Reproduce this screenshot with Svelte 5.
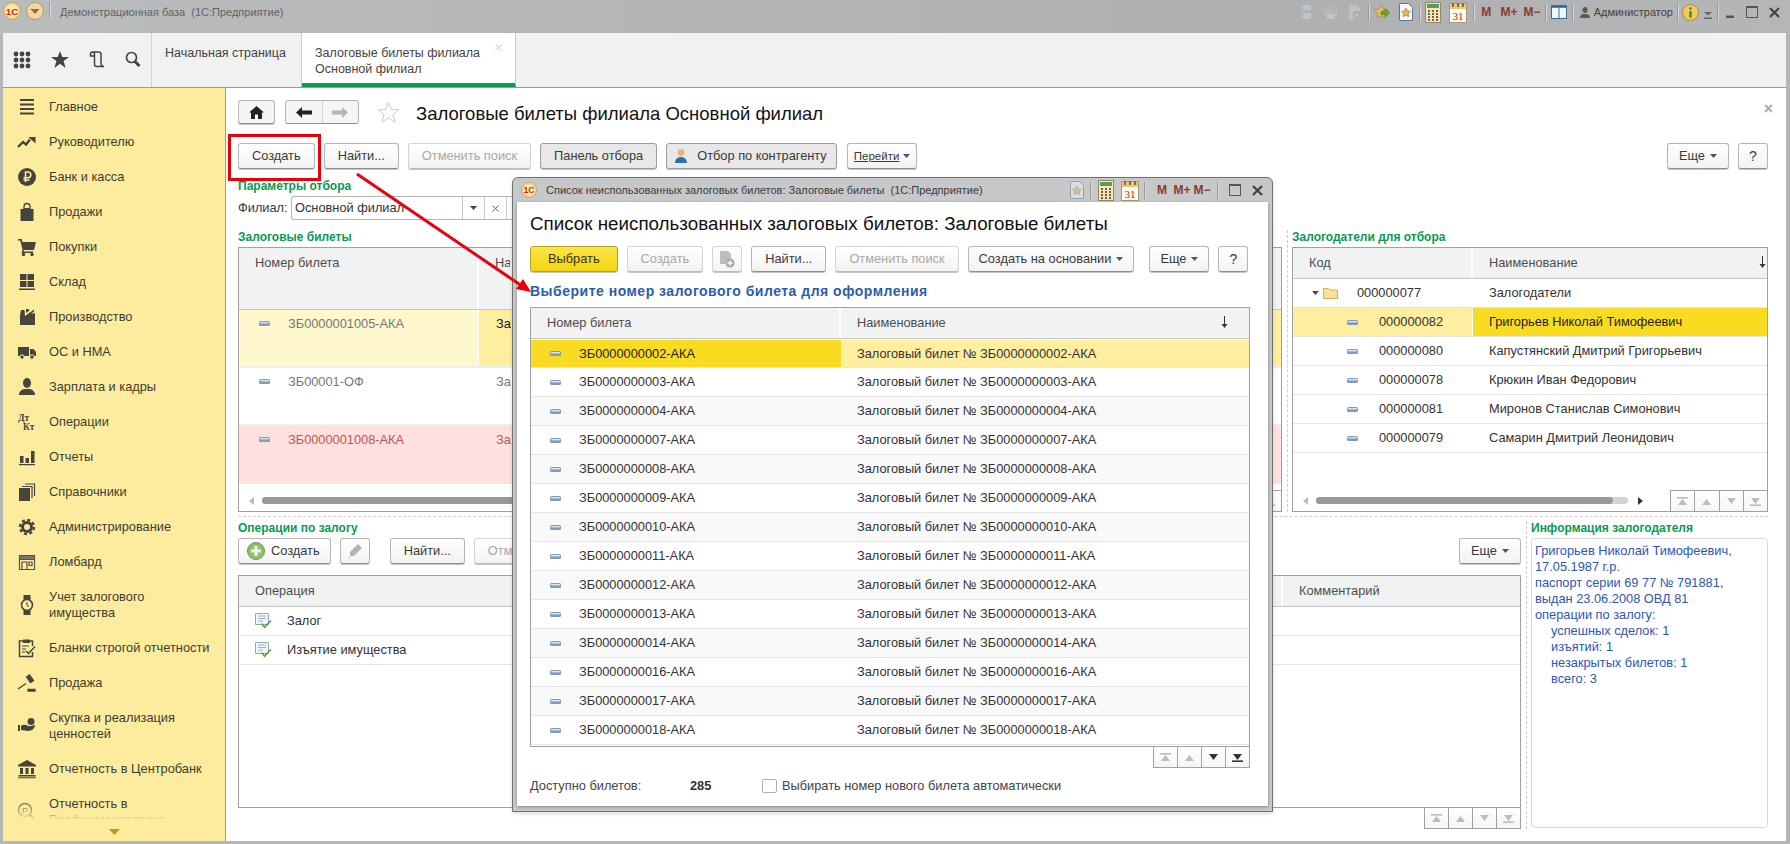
<script>
  const menu = [
    { icon: 'burger', lines: ['Главное'] },
    { icon: 'trend', lines: ['Руководителю'] },
    { icon: 'ruble', lines: ['Банк и касса'] },
    { icon: 'bag', lines: ['Продажи'] },
    { icon: 'cart', lines: ['Покупки'] },
    { icon: 'stock', lines: ['Склад'] },
    { icon: 'factory', lines: ['Производство'] },
    { icon: 'truck', lines: ['ОС и НМА'] },
    { icon: 'person', lines: ['Зарплата и кадры'] },
    { icon: 'dtkt', lines: ['Операции'] },
    { icon: 'bars', lines: ['Отчеты'] },
    { icon: 'docs', lines: ['Справочники'] },
    { icon: 'gear', lines: ['Администрирование'] },
    { icon: 'shop', lines: ['Ломбард'] },
    { icon: 'watch', lines: ['Учет залогового', 'имущества'] },
    { icon: 'clip', lines: ['Бланки строгой отчетности'] },
    { icon: 'gavel', lines: ['Продажа'] },
    { icon: 'hand', lines: ['Скупка и реализация', 'ценностей'] },
    { icon: 'bank', lines: ['Отчетность в Центробанк'] },
    { icon: 'lens', lines: ['Отчетность в', 'Росфинмониторинг'] }
  ]

  const tickets = [
    { no: 'ЗБ0000001005-АКА', name: 'Залоговый билет', kind: 'cur' },
    { no: 'ЗБ00001-ОФ', name: 'Залоговый билет', kind: '' },
    { no: 'ЗБ0000001008-АКА', name: 'Залоговый билет', kind: 'bad' }
  ]

  const pawners = [
    { code: '000000082', name: 'Григорьев Николай Тимофеевич', sel: true },
    { code: '000000080', name: 'Капустянский Дмитрий Григорьевич' },
    { code: '000000078', name: 'Крюкин Иван Федорович' },
    { code: '000000081', name: 'Миронов Станислав Симонович' },
    { code: '000000079', name: 'Самарин Дмитрий Леонидович' }
  ]

  const free = ['02', '03', '04', '07', '08', '09', '10', '11', '12', '13', '14', '16', '17', '18']
    .map((n) => 'ЗБ00000000' + n + '-АКА')
</script>

{#snippet dash()}
  <svg class="dash" width="11" height="5" viewBox="0 0 11 5"><rect width="11" height="5" rx="1.5" fill="#7f9cc0"/><rect x="1" y="1" width="9" height="1.4" fill="#dbe6f2"/></svg>
{/snippet}

{#snippet logo(size)}
  <svg width={size} height={size} viewBox="0 0 20 20">
    <circle cx="10" cy="10" r="9.5" fill="#f6d98a" stroke="#b9a26a"/>
    <circle cx="10" cy="10" r="7" fill="#fbe9b0"/>
    <text x="10" y="14" text-anchor="middle" font-size="11" font-weight="700" font-family="Liberation Sans" fill="#d8261c">1С</text>
  </svg>
{/snippet}

{#snippet caret(color)}
  <svg class="caret" width="7" height="4" viewBox="0 0 7 4"><path d="M0 0h7L3.5 4z" fill={color}/></svg>
{/snippet}

{#snippet sortDown()}
  <svg class="sort" width="7" height="12" viewBox="0 0 7 12"><path d="M3.500 0v10" stroke="#333"/><path d="M.5 8h6l-3 4z" fill="#333"/></svg>
{/snippet}

{#snippet starDoc()}
  <svg width="16" height="20" viewBox="0 0 16 20"><path d="M1.500 1.500h9l4 4v13h-13z" fill="#f4f7fb" stroke="#4f78a8"/><path d="M8 6l1.500 3 3 .4-2.200 2.100.6 3.200L8 13.200l-2.900 1.500.6-3.200L3.500 9.400l3-.4z" fill="#e8b64c" stroke="#a5762a" stroke-width=".6"/></svg>
{/snippet}

{#snippet calc()}
  <svg width="16" height="21" viewBox="0 0 16 21"><rect x=".5" y=".5" width="15" height="20" fill="#efe6c4" stroke="#8f8a6a"/><rect x="2" y="2" width="12" height="4" fill="#5f9a54"/><path d="M3 8h2v2H3zM7 8h2v2H7zM11 8h2v2h-2zM3 11h2v2H3zM7 11h2v2H7zM11 11h2v2h-2zM3 14h2v2H3zM7 14h2v2H7zM11 14h2v2h-2zM3 17h2v2H3zM7 17h2v2H7zM11 17h2v2h-2z" fill="#8a5a2a"/></svg>
{/snippet}

{#snippet cal()}
  <svg class="calsheet" width="18" height="21" viewBox="0 0 18 21"><rect x=".5" y="1.500" width="17" height="19" fill="#fdfaf0" stroke="#a89a70"/><rect x="1" y="2" width="16" height="5" fill="#ebc77a"/><path d="M3 1h2v4H3zM8 1h2v4H8zM13 1h2v4h-2z" fill="#8a6a3a"/><text x="9" y="18" text-anchor="middle" font-size="11" font-family="Liberation Serif" fill="#c8200f">31</text></svg>
{/snippet}

{#snippet nav(on)}
  <div class="nav">
    {#each [0, 1, 2, 3] as i}
      <span class="navcell">
        <svg width="11" height="9" viewBox="0 0 11 9" fill={on && i > 1 ? '#333' : '#bdbdbd'}>
          {#if i < 2}
            {#if i == 0}<rect width="11" height="1.600"/>{/if}
            <path d="M5.500 2L10 8H1z"/>
          {:else}
            <path d="M1 1h9L5.500 7z"/>
            {#if i == 3}<rect y="7.400" width="11" height="1.600"/>{/if}
          {/if}
        </svg>
      </span>
    {/each}
  </div>
{/snippet}

{#snippet opIcon()}
  <svg width="17" height="16" viewBox="0 0 17 16"><path d="M.5.500h13v11H.5z" fill="#f3f7fb" stroke="#8ea6bf"/><path d="M3 3h8M3 5.500h8M3 8h5" stroke="#9db0c4"/><path d="M7 10l2.500 3L15.500 7l1 1-7 7.500L6 11z" fill="#5aa32f"/></svg>
{/snippet}

{#snippet sideIcon(name)}
  <svg width="20" height="20" viewBox="0 0 20 20" fill="#45453c">
    {#if name == 'burger'}
      <path d="M3 2h14v2H3zM3 6.500h14v2H3zM3 11h14v2H3zM3 15.500h14v2H3z"/>
    {:else if name == 'trend'}
      <path d="M1 15l5-5 3 2.500 4-5" fill="none" stroke="#45453c" stroke-width="2.400"/><path d="M11.500 5h7v6.500z"/>
    {:else if name == 'ruble'}
      <circle cx="10" cy="10" r="9"/><path d="M8.500 15V5h2.500a2.800 2.800 0 0 1 0 5.700H6.500M6.500 13h6" fill="none" stroke="#fdec9e" stroke-width="1.500"/>
    {:else if name == 'bag'}
      <path d="M3.500 7h3l.5-1h6l.5 1h3v12h-13z"/><path d="M7 9V4.500a3 3 0 0 1 6 0V9" fill="none" stroke="#45453c" stroke-width="1.300"/>
    {:else if name == 'cart'}
      <path d="M1 2h3.500l1 3H19l-2 8H7l-.5 1.500H16v1.500H4.500l1-3L3.300 3.500H1z"/><circle cx="6.500" cy="17.500" r="1.700"/><circle cx="15" cy="17.500" r="1.700"/>
    {:else if name == 'stock'}
      <path d="M3 2h6.500v6H3zM10.500 2H17v6h-6.500zM3 9h6.500v6H3zM10.500 9H17v6h-6.500zM2 16.500h16V18H2z"/>
    {:else if name == 'factory'}
      <path d="M3 18V8l1-5h3.500l.5 6 9-6.500v2L14 7l4-1v12zM9 2h2.500l1 1.500L9 6z"/>
    {:else if name == 'truck'}
      <path d="M1 5h11v9H1zM13 7h3.500l2.500 3v4h-6z"/><circle cx="5" cy="15" r="2.200" stroke="#fdec9e"/><circle cx="15" cy="15" r="2.200" stroke="#fdec9e"/>
    {:else if name == 'person'}
      <ellipse cx="10" cy="6" rx="4" ry="5"/><path d="M2 18c0-4 3-5.500 5.500-6h5c2.500.5 5.500 2 5.500 6z"/>
    {:else if name == 'dtkt'}
      <text x="1" y="9" font-size="9.500" font-weight="700" font-family="Liberation Serif">Дт</text>
      <text x="6" y="18" font-size="9.500" font-weight="700" font-family="Liberation Serif">Кт</text>
    {:else if name == 'bars'}
      <path d="M3 9h3.500v7H3zM8.500 11H12v5H8.500zM14 4h3.500v12H14zM2 17h16v1.300H2z"/>
    {:else if name == 'docs'}
      <path d="M2 6h11v13H2z"/><path d="M5 4.500h10V16M8 2h9.500v12" fill="none" stroke="#45453c" stroke-width="1.200"/>
    {:else if name == 'gear'}
      <circle cx="10" cy="10" r="4.500" fill="none" stroke="#45453c" stroke-width="3"/>
      <circle cx="10" cy="10" r="7" fill="none" stroke="#45453c" stroke-width="2.500" stroke-dasharray="3 2.500"/>
    {:else if name == 'shop'}
      <path d="M2.500 3.500h15v14h-15zM2.500 7.500h15M5 10h5v7.500H5zM12 10h3v3.500h-3z" fill="none" stroke="#55554a" stroke-width="1.200"/><path d="M3 4h14v3H3z" fill="#77776a"/>
    {:else if name == 'watch'}
      <path d="M6.500 0h7v5h-7zM6.500 15h7v5h-7z"/><circle cx="10" cy="10" r="5.500" fill="#fdec9e" stroke="#45453c" stroke-width="1.600"/><path d="M10 7v3.500l2 1" fill="none" stroke="#45453c"/>
    {:else if name == 'clip'}
      <path d="M6 3H2.500v15.500h13V14M13 3h2.500v5" fill="none" stroke="#45453c" stroke-width="1.500"/><path d="M6 1.500h7v3.500H6z"/><path d="M5 8h7M5 11h4M5 14h3" stroke="#45453c"/><path d="M9 13l2.500 2.500L18 8.500" fill="none" stroke="#45453c" stroke-width="1.500"/>
    {:else if name == 'gavel'}
      <path d="M1 16l8-5.500M11 16.500h7V18h-7zM9.500 4l3-2 4 5.500-3 2z" stroke="#45453c" stroke-width="1.300"/>
    {:else if name == 'hand'}
      <circle cx="14" cy="5.500" r="3.500"/><path d="M4 10c3-2 5-1 7 0h3l4-1c0 3-3 6-7 6-3 0-4-1-7-1zM1 9h2v6H1z"/>
    {:else if name == 'bank'}
      <path d="M10 1l9 5v1.500H1V6zM3 9h3v6H3zM8.500 9h3v6h-3zM14 9h3v6h-3zM1.500 16h17v1.500h-17zM1 18.200h18v1H1z"/>
    {:else if name == 'lens'}
      <g opacity=".6"><circle cx="8" cy="8" r="6.500" fill="none" stroke="#45453c" stroke-width="1.400"/><path d="M13 13l6 5.500" stroke="#45453c" stroke-width="2.500"/><text x="8" y="11.500" text-anchor="middle" font-size="9" font-family="Liberation Sans">P</text></g>
    {/if}
  </svg>
{/snippet}

<div class="app">
  <header class="titlebar">
    <span class="tl-logo">{@render logo(18)}</span>
    <svg class="tl-menu" width="18" height="18" viewBox="0 0 18 18"><circle cx="9" cy="9" r="8.500" fill="#f4d79a" stroke="#a99a74"/><path d="M4.500 7h9L9 12z" fill="#8a6a4a"/></svg>
    <i class="sep big"></i>
    <span class="tl-text">Демонстрационная база&nbsp; (1С:Предприятие)</span>
    <div class="tl-tools">
      <svg class="tool" width="16" height="16" viewBox="0 0 16 16" opacity=".5"><path d="M1 1h14v14H1z" fill="#a7b9c9"/><path d="M4 1h8v5H4zM4 9h8v6H4z" fill="#d5dbe0"/></svg>
      <svg class="tool" width="16" height="16" viewBox="0 0 16 16" opacity=".5"><path d="M4 1h8v4H4zM1 5h14v7H1z" fill="#b9bfc4"/><path d="M4 10h8v5H4z" fill="#d9dcde"/></svg>
      <svg class="tool" width="16" height="16" viewBox="0 0 16 16" opacity=".5"><path d="M2 1h8l3 3v11H2z" fill="#cfd4d8"/><circle cx="10" cy="11" r="3" fill="none" stroke="#8ba0b0" stroke-width="1.500"/></svg>
      <i class="sep"></i>
      <svg class="tool" width="16" height="16" viewBox="0 0 20 20"><path d="M9 1l2.500 5.500 6 .7-4.500 4 1.200 6L9 14.300 3.800 17.200 5 11.200.5 7.200l6-.7z" fill="#edc25c" stroke="#9a7a30" stroke-width=".7"/><path d="M9 9h5V6l5.500 5-5.500 5v-3H9z" fill="#6aa536" stroke="#3e6e1c" stroke-width=".7"/></svg>
      <span class="tool">{@render starDoc()}</span>
      <i class="sep"></i>
      <span class="tool">{@render calc()}</span>
      <span class="tool">{@render cal()}</span>
      <i class="sep wide"></i>
      <span class="mem">M</span><span class="mem">M+</span><span class="mem">M−</span>
      <i class="sep"></i>
      <svg class="tool" width="16" height="14" viewBox="0 0 17 15"><rect x=".5" y=".5" width="16" height="14" fill="#f1f6fb" stroke="#32689c"/><rect x="1" y="1" width="15" height="2" fill="#32689c"/><path d="M8.500 3v11" stroke="#32689c"/></svg>
      <i class="sep"></i>
      <svg class="user" width="10" height="11" viewBox="0 0 10 11" fill="#5c5c50"><ellipse cx="5" cy="3" rx="2.500" ry="3"/><path d="M0 11c0-3 2-4 3-4h4c1 0 3 1 3 4z"/></svg>
      <span class="adm">Администратор</span>
      <i class="sep"></i>
      <svg class="info" width="17" height="17" viewBox="0 0 17 17"><circle cx="8.500" cy="8.500" r="8" fill="#f0ca5e" stroke="#a98a3a"/><circle cx="8.500" cy="4.500" r="1.300" fill="#3c8a2a"/><path d="M7.300 7h2.400v6.500H7.300z" fill="#3c8a2a"/></svg>
      <svg class="dd" width="9" height="7" viewBox="0 0 9 7"><path d="M0 0h8L4 3.500z" fill="#666"/><path d="M0 5.500h8V7H0z" fill="#666"/></svg>
      <i class="sep"></i>
      <span class="wbtn"><svg width="8" height="12" viewBox="0 0 8 12"><path d="M0 9.500h8V12H0z" fill="#555"/></svg></span>
      <span class="wbtn"><svg width="12" height="12" viewBox="0 0 12 12"><rect x=".5" y=".5" width="11" height="11" fill="none" stroke="#555"/><path d="M0 0h12v2H0z" fill="#555"/></svg></span>
      <span class="wbtn"><svg width="11" height="11" viewBox="0 0 11 11"><path d="M1 1l9 9M10 1l-9 9" stroke="#444" stroke-width="2.200"/></svg></span>
    </div>
  </header>

  <div class="tabbar">
    <div class="quick">
      <svg width="18" height="18" viewBox="0 0 18 18" fill="#444"><circle cx="3" cy="3" r="2.400"/><circle cx="9" cy="3" r="2.400"/><circle cx="15" cy="3" r="2.400"/><circle cx="3" cy="9" r="2.400"/><circle cx="9" cy="9" r="2.400"/><circle cx="15" cy="9" r="2.400"/><circle cx="3" cy="15" r="2.400"/><circle cx="9" cy="15" r="2.400"/><circle cx="15" cy="15" r="2.400"/></svg>
      <svg width="18" height="17" viewBox="0 0 18 17" fill="#444"><path d="M9 0l2.300 6H18l-5.400 4 2 7L9 12.800 3.400 17l2-7L0 6h6.700z"/></svg>
      <svg width="16" height="17" viewBox="0 0 16 17" fill="none" stroke="#444" stroke-width="1.500"><path d="M3 1H10C11.500 1 12 2 12 3V12C12 14 13 15.500 15 15.500H7.500C6 15.500 5.500 14.500 5.500 13V3C5.500 2 5 1 3.500 1C2 1 1.500 2 1.500 3.500V5H5.500"/></svg>
      <svg width="16" height="16" viewBox="0 0 16 16" fill="none" stroke="#444"><circle cx="6.500" cy="6.500" r="5" stroke-width="1.700"/><path d="M10 10.500l4.500 4.500" stroke-width="3"/></svg>
    </div>
    <div class="tab first">Начальная страница</div>
    <div class="tab active">
      Залоговые билеты филиала<br>Основной филиал
      <svg class="tabx" width="7" height="7" viewBox="0 0 7 7"><path d="M.5.500l6 6M6.500.500l-6 6" stroke="#c4c8c8"/></svg>
    </div>
  </div>

  <div class="body">
    <aside class="side">
      {#each menu as m}
        <div class="item" class:two={m.lines.length > 1}>
          <span class="sicon">{@render sideIcon(m.icon)}</span>
          <span class="stext">{#each m.lines as l}{l}<br>{/each}</span>
        </div>
      {/each}
      <div class="fade"><svg width="11" height="6" viewBox="0 0 11 6"><path d="M0 0h11L5.500 6z" fill="#bb9a1e"/></svg></div>
    </aside>

    <main class="main">
      <div class="head">
        <button class="btn home"><svg width="15" height="13" viewBox="0 0 15 13" fill="#222"><path d="M7.500 0L15 6.500h-2V13H9V8.500H6V13H2V6.500H0z"/></svg></button>
        <div class="btngroup">
          <span><svg width="16" height="11" viewBox="0 0 16 11" fill="#222"><path d="M6 0v3.500h10v4H6V11L0 5.500z"/></svg></span>
          <span><svg width="16" height="11" viewBox="0 0 16 11" fill="#b5b5b5"><path d="M10 0v3.500H0v4h10V11l6-5.500z"/></svg></span>
        </div>
        <svg class="favstar" width="23" height="23" viewBox="0 0 23 23"><path d="M11.500 1.500l3 7.200h7.500l-6 4.900 2.200 7.700-6.700-4.500-6.700 4.500 2.200-7.700-6-4.900h7.500z" fill="#fff" stroke="#c9cccc"/></svg>
        <h1 class="title">Залоговые билеты филиала Основной филиал</h1>
        <svg class="closex" width="9" height="9" viewBox="0 0 9 9"><path d="M1 1l7 7M8 1L1 8" stroke="#a9adad" stroke-width="1.800"/></svg>
      </div>

      <div class="tb first">
        <button class="btn">Создать</button>
        <button class="btn">Найти...</button>
        <button class="btn off">Отменить поиск</button>
        <button class="btn pressed">Панель отбора</button>
        <button class="btn pressed2">
          <svg width="16" height="16" viewBox="0 0 16 16"><circle cx="8" cy="4.500" r="3.500" fill="#eab678"/><path d="M2 15c0-4 3-6 6-6s6 2 6 6z" fill="#2e6fb5"/></svg>
          Отбор по контрагенту
        </button>
        <button class="btn small"><u>Перейти</u> {@render caret('#555')}</button>
        <div class="grow"></div>
        <button class="btn more">Еще {@render caret('#555')}</button>
        <button class="btn q">?</button>
      </div>

      <div class="grp first">Параметры отбора</div>
      <div class="filter">
        <span class="flabel">Филиал:</span>
        <div class="input">
          <span class="ival">Основной филиал</span>
          <span class="icell">{@render caret('#444')}</span>
          <span class="icell"><svg width="7" height="7" viewBox="0 0 7 7"><path d="M.5.500l6 6M6.500.500l-6 6" stroke="#666"/></svg></span>
          <span class="icell"></span>
        </div>
      </div>

      <div class="upper">
        <section class="ucol">
          <div class="grp">Залоговые билеты</div>
          <div class="table big">
            <div class="thead tall">
              <div class="th c240">Номер билета</div>
              <div class="th"><span class="cut">Наименование</span></div>
            </div>
            {#each tickets as t}
              <div class="trow tallrow {t.kind}">
                <div class="td c240 col1">{@render dash()}<span>{t.no}</span></div>
                <div class="td col2"><span class="cut">{t.name}</span></div>
              </div>
            {/each}
            <div class="grow"></div>
            <div class="tfoot">
              <svg class="arrl" width="5" height="8" viewBox="0 0 5 8"><path d="M5 0v8L0 4z" fill="#bbb"/></svg>
              <div class="track long"><div class="thumb"></div></div>
              {@render nav(false)}
            </div>
          </div>
        </section>
        <div class="vdash"></div>
        <section class="rcol">
          <div class="grp">Залогодатели для отбора</div>
          <div class="table big">
            <div class="thead">
              <div class="th c180">Код</div>
              <div class="th">Наименование{@render sortDown()}</div>
            </div>
            <div class="trow">
              <div class="td c180 tree root">
                {@render caret('#444')}
                <svg width="15" height="12" viewBox="0 0 15 12"><path d="M.5 1.500h5l1.500 1.500h7.500v8.500H.5z" fill="#fbe19c" stroke="#e0a85a"/></svg>
                <span>000000077</span>
              </div>
              <div class="td name">Залогодатели</div>
            </div>
            {#each pawners as p}
              <div class="trow" class:sel={p.sel}>
                <div class="td c180 tree">{@render dash()}<span>{p.code}</span></div>
                <div class="td name">{p.name}</div>
              </div>
            {/each}
            <div class="grow"></div>
            <div class="tfoot">
              <svg class="arrl" width="5" height="8" viewBox="0 0 5 8"><path d="M5 0v8L0 4z" fill="#bbb"/></svg>
              <div class="track"><div class="thumb"></div></div>
              <svg class="arrr" width="5" height="8" viewBox="0 0 5 8"><path d="M0 0v8l5-4z" fill="#333"/></svg>
              {@render nav(false)}
            </div>
          </div>
        </section>
      </div>

      <div class="hdash"></div>

      <div class="lower">
        <section class="lcol">
          <div class="grp">Операции по залогу</div>
          <div class="tb ops">
            <button class="btn plus">
              <svg width="18" height="18" viewBox="0 0 18 18"><circle cx="9" cy="9" r="8.500" fill="#8fc06a" stroke="#6f8f5a"/><path d="M7.500 4h3v3.500H14v3h-3.500V14h-3v-3.500H4v-3h3.500z" fill="#f3f8ee"/></svg>
              Создать
            </button>
            <button class="btn pen"><svg width="14" height="14" viewBox="0 0 14 14" fill="#b5b5b5"><path d="M10 0l4 4-8 8H2v-4zM0 14l1.500-1.500h1L1 14z"/></svg></button>
            <button class="btn findop">Найти...</button>
            <button class="btn off cutbtn">Отменить поиск</button>
            <div class="grow"></div>
            <button class="btn more">Еще {@render caret('#555')}</button>
          </div>
          <div class="table ops">
            <div class="thead">
              <div class="th opcol">Операция</div>
              <div class="grow"></div>
              <div class="th ccol">Комментарий</div>
            </div>
            <div class="trow"><div class="td op">{@render opIcon()}<span>Залог</span></div></div>
            <div class="trow"><div class="td op">{@render opIcon()}<span>Изъятие имущества</span></div></div>
          </div>
          {@render nav(false)}
        </section>
        <div class="vdash"></div>
        <section class="icol">
          <div class="grp">Информация залогодателя</div>
          <div class="infobox">
            Григорьев Николай Тимофеевич,<br>
            17.05.1987 г.р.<br>
            паспорт серии 69 77 № 791881,<br>
            выдан 23.06.2008 ОВД 81<br>
            операции по залогу:
            <div class="ind">успешных сделок: 1<br>изъятий: 1<br>незакрытых билетов: 1<br>всего: 3</div>
          </div>
        </section>
      </div>
    </main>
  </div>

  <div class="modal">
    <div class="mtitle">
      <span class="mlogo">{@render logo(16)}</span>
      <span class="mtext">Список неиспользованных залоговых билетов: Залоговые билеты&nbsp; (1С:Предприятие)</span>
      <div class="mtools">
        <span class="faded">{@render starDoc()}</span>
        <i class="sep"></i>
        {@render calc()}
        {@render cal()}
        <i class="sep"></i>
        <span class="mems"><span class="mem sm">M</span><span class="mem sm">M+</span><span class="mem sm">M−</span></span>
        <i class="sep"></i>
        <svg class="mmax" width="12" height="12" viewBox="0 0 12 12"><rect x=".5" y=".5" width="11" height="11" fill="none" stroke="#555"/><path d="M0 0h12v2H0z" fill="#555"/></svg>
        <svg class="mclose" width="11" height="11" viewBox="0 0 11 11"><path d="M1 1l9 9M10 1l-9 9" stroke="#444" stroke-width="2.200"/></svg>
      </div>
    </div>
    <div class="mbody">
      <h2 class="mhead">Список неиспользованных залоговых билетов: Залоговые билеты</h2>
      <div class="tb mtb">
        <button class="btn primary">Выбрать</button>
        <button class="btn off">Создать</button>
        <button class="btn off pen"><svg width="16" height="17" viewBox="0 0 16 17"><path d="M1 0h8l3 3v10H1z" fill="#bdbdbd"/><circle cx="11" cy="12" r="4.500" fill="#aaa"/><path d="M10 9.500h2v1.500h1.500v2H12v1.500h-2V13H8.500v-2H10z" fill="#eee"/></svg></button>
        <button class="btn">Найти...</button>
        <button class="btn off">Отменить поиск</button>
        <button class="btn based">Создать на основании {@render caret('#555')}</button>
        <button class="btn more shift">Еще {@render caret('#555')}</button>
        <button class="btn q">?</button>
      </div>
      <div class="hint">Выберите номер залогового билета для оформления</div>
      <div class="table modalt">
        <div class="thead">
          <div class="th c310">Номер билета</div>
          <div class="th in">Наименование{@render sortDown()}</div>
        </div>
        {#each free as f, i}
          <div class="trow mrow" class:first={i == 0}>
            <div class="td c310 col1">{@render dash()}<span>{f}</span></div>
            <div class="td mname">Залоговый билет № {f}</div>
          </div>
        {/each}
      </div>
      {@render nav(true)}
      <div class="mfoot">
        <span class="avail">Доступно билетов:</span>
        <b>285</b>
        <span class="check"></span>
        <span class="auto">Выбирать номер нового билета автоматически</span>
      </div>
    </div>
  </div>

  <svg class="marks" width="1790" height="844" viewBox="0 0 1790 844">
    <rect x="229.500" y="135.500" width="90" height="44" fill="none" stroke="#e8000c" stroke-width="3"/>
    <path d="M357 174L522 286" stroke="#e8000c" stroke-width="3"/>
    <path d="M531 292L516 289L523 279z" fill="#e8000c"/>
  </svg>
</div>

<style>
  :global(body) {
    overflow: hidden;
  }
  .app {
    position: relative;
    width: 1790px;
    height: 844px;
    display: flex;
    flex-direction: column;
    background: #b4b6b7;
    font: 12.800px/16px "Liberation Sans", Arial, sans-serif;
    color: #3a3a3a;
    overflow: hidden;
  }
  .grow {
    flex: 1;
  }
  svg {
    flex: none;
    display: block;
  }

  .titlebar {
    height: 33px;
    flex: none;
    display: flex;
    align-items: flex-start;
    padding: 2px 0 0 3px;
    box-sizing: border-box;
    background: linear-gradient(90deg, #bbbcbd, #adafb0 70%, #b4b6b7);
  }
  .tl-menu {
    margin-left: 5px;
  }
  .sep {
    flex: none;
    width: 1px;
    height: 17px;
    margin: 0 0 0 2px;
    background: #d7d9da;
    box-shadow: -1px 0 0 #96989a;
  }
  .sep.wide {
    margin-left: 5px;
  }
  .sep.big {
    margin: 0 9px 0 6px;
  }
  .tl-text {
    line-height: 20px;
    font-size: 11px;
    color: #606264;
  }
  .tl-tools {
    margin-left: auto;
    display: flex;
    align-items: center;
    height: 20px;
    padding-right: 5px;
  }
  .tool {
    width: 24px;
    display: flex;
    justify-content: center;
  }
  svg.tool {
    padding: 0 4px;
    box-sizing: content-box;
    width: 16px;
  }
  .mem {
    width: 23px;
    text-align: center;
    font-weight: 700;
    font-size: 12px;
    color: #8b3a30;
  }
  .mems {
    display: flex;
  }
  .mem.sm {
    width: 20px;
    font-size: 12px;
  }
  .user {
    margin: 0 4px 0 6px;
  }
  .adm {
    font-size: 11px;
    color: #4c4034;
    white-space: nowrap;
    margin-right: 3px;
  }
  .info {
    margin: 0 5px 0 3px;
  }
  .dd {
    margin: 6px 3px 0 0;
  }
  .wbtn {
    width: 22px;
    display: flex;
    justify-content: center;
  }

  .tabbar {
    height: 55px;
    flex: none;
    margin: 0 4px 0 3px;
    display: flex;
    box-sizing: border-box;
    background: #f0f2f1;
    border-bottom: 1px solid #9a9c9c;
  }
  .quick {
    width: 149px;
    flex: none;
    box-sizing: border-box;
    display: flex;
    align-items: flex-start;
    gap: 20px;
    padding: 18px 0 0 10px;
    border-right: 1px solid #d2d4d4;
  }
  .tab {
    position: relative;
    background: #fff;
    padding: 12px 0 0 13px;
    box-sizing: border-box;
    color: #444;
    font-size: 12.500px;
  }
  .tab.first {
    width: 150px;
    background: #f0f2f1;
    border-right: 1px solid #c9cbcb;
  }
  .tab.active {
    width: 214px;
    border-right: 1px solid #c9cbcb;
    border-bottom: 4px solid #0d9a4e;
  }
  .tabx {
    position: absolute;
    top: 11px;
    right: 13px;
  }

  .body {
    flex: 1;
    min-height: 0;
    display: flex;
    margin: 0 4px 3px 3px;
    background: #fff;
  }
  .side {
    position: relative;
    width: 223px;
    flex: none;
    box-sizing: border-box;
    padding-top: 1px;
    background: #fdec9e;
    border-right: 1px solid #b9a234;
    overflow: hidden;
    color: #3e3c30;
  }
  .item {
    height: 35px;
    display: flex;
    align-items: center;
  }
  .item.two {
    height: 51px;
  }
  .sicon {
    width: 46px;
    flex: none;
    display: flex;
    justify-content: center;
    padding-left: 2px;
    box-sizing: border-box;
  }
  .fade {
    position: absolute;
    left: 0;
    right: 0;
    bottom: 0;
    height: 34px;
    display: flex;
    align-items: flex-end;
    justify-content: center;
    padding-bottom: 6px;
    box-sizing: border-box;
    background: linear-gradient(#fdec9e00, #fdec9e 38%);
  }

  .main {
    flex: 1;
    min-width: 0;
    padding: 12px 18px 0 12px;
  }
  .head {
    height: 24px;
    display: flex;
    align-items: center;
  }
  .btn {
    height: 26px;
    padding: 0 13px;
    display: flex;
    align-items: center;
    flex: none;
    gap: 5px;
    box-sizing: border-box;
    background: linear-gradient(#fff, #f3f3f3);
    border: 1px solid #b6b6b6;
    border-bottom-color: #8f8f8f;
    border-radius: 3px;
    box-shadow: 0 1px 0 #c4c4c4;
    font: inherit;
    color: #3a3a3a;
    white-space: nowrap;
  }
  .btn.home {
    width: 37px;
    height: 24px;
    padding: 0;
    justify-content: center;
    background: #f4f5f5;
  }
  .btngroup {
    margin-left: 10px;
    display: flex;
    height: 24px;
    width: 74px;
    box-sizing: border-box;
    background: #f4f5f5;
    border: 1px solid #b6b6b6;
    border-bottom-color: #8f8f8f;
    border-radius: 3px;
  }
  .btngroup span {
    flex: 1;
    display: flex;
    align-items: center;
    justify-content: center;
  }
  .btngroup span + span {
    border-left: 1px solid #d5d5d5;
  }
  .favstar {
    margin-left: 18px;
  }
  .title {
    margin: 3px 0 0 16px;
    font-size: 18.500px;
    line-height: 24px;
    font-weight: 400;
    color: #111;
  }
  .closex {
    margin-left: auto;
    margin-right: -5px;
    margin-top: -8px;
  }

  .tb {
    display: flex;
    gap: 9px;
    height: 26px;
  }
  .tb.first {
    margin-top: 19px;
  }
  .btn.off {
    color: #a8a8a8;
    border-color: #d4d4d4;
    border-bottom-color: #bbb;
  }
  .btn.cutbtn {
    width: 40px;
    overflow: hidden;
    justify-content: flex-start;
  }
  .btn.pressed {
    background: #e8e8e8;
    border-color: #9d9d9d;
  }
  .btn.pressed2 {
    background: #e8e8e8;
    border-color: #9d9d9d;
    padding: 0 9px 0 6px;
    gap: 8px;
  }
  .btn.small {
    font-size: 11.500px;
    padding: 0 6px;
    margin-left: 1px;
    gap: 4px;
  }
  .btn.more {
    padding: 0 11px;
  }
  .btn.based {
    padding: 0 10px;
  }
  .btn.shift {
    margin-left: 6px;
    padding: 0 10px;
  }
  .btn.q {
    width: 30px;
    padding: 0;
    justify-content: center;
    font-size: 14px;
  }

  .grp {
    height: 14px;
    font-size: 12px;
    font-weight: 700;
    line-height: 14px;
    color: #0a9a4f;
    white-space: nowrap;
  }
  .grp.first {
    margin-top: 10px;
  }
  .filter {
    margin-top: 3px;
    display: flex;
    align-items: center;
    gap: 4px;
  }
  .flabel {
    width: 49px;
    flex: none;
  }
  .input {
    width: 245px;
    height: 24px;
    display: flex;
    box-sizing: border-box;
    background: #fff;
    border: 1px solid #b6b6b6;
    border-radius: 3px 0 0 3px;
    border-right: none;
    color: #333;
  }
  .ival {
    width: 167px;
    flex: none;
    padding-left: 3px;
    line-height: 22px;
    white-space: nowrap;
    overflow: hidden;
  }
  .icell {
    width: 21px;
    flex: none;
    display: flex;
    align-items: center;
    justify-content: center;
    border-left: 1px solid #c9c9c9;
  }

  .upper {
    margin-top: 10px;
    display: flex;
    height: 282px;
  }
  .ucol {
    width: 1044px;
    flex: none;
  }
  .rcol {
    flex: 1;
    min-width: 0;
  }
  .vdash {
    width: 0;
    margin: 0 4px 0 5px;
    border-left: 1px dashed #cfcfcf;
  }
  .hdash {
    margin-top: 4px;
    border-top: 1px dashed #cfcfcf;
  }

  .table {
    margin-top: 3px;
    box-sizing: border-box;
    display: flex;
    flex-direction: column;
    background: #fff;
    border: 1px solid #a0a0a0;
    color: #333;
    overflow: hidden;
  }
  .table.big {
    height: 265px;
  }
  .thead {
    height: 31px;
    flex: none;
    display: flex;
    box-sizing: border-box;
    background: #f1f3f2;
    border-bottom: 1px solid #c4c6c6;
    color: #4d4d4d;
  }
  .thead.tall {
    height: 62px;
  }
  .th {
    position: relative;
    flex: 1;
    padding: 7px 0 0 16px;
    white-space: nowrap;
  }
  .cut {
    display: block;
    width: 15px;
    overflow: hidden;
    white-space: nowrap;
  }
  .c240 {
    width: 240px;
    flex: none;
    box-sizing: border-box;
  }
  .c180 {
    width: 180px;
    flex: none;
    box-sizing: border-box;
  }
  .c310 {
    width: 310px;
    flex: none;
    box-sizing: border-box;
  }
  .th.c240,
  .th.c180,
  .th.c310 {
    border-right: 2px solid #fff;
  }
  .sort {
    position: absolute;
    right: 1px;
    top: 8px;
  }
  .th.in .sort {
    right: 21px;
  }
  .trow {
    height: 29px;
    flex: none;
    display: flex;
    box-sizing: border-box;
    border-bottom: 1px solid #e4e6e6;
  }
  .td {
    display: flex;
    align-items: center;
    white-space: nowrap;
  }
  .tallrow {
    height: 58px;
    color: #777;
    border-bottom: 2px solid #eef0f0;
  }
  .tallrow .td {
    align-items: flex-start;
    padding-top: 6px;
  }
  .tallrow .col2 {
    flex: 1;
    padding-left: 17px;
    box-sizing: border-box;
  }
  .tallrow.cur .col1 {
    background: #fef8cc;
    border-right: 1px solid #fff;
  }
  .tallrow.cur .col2 {
    background: #feeea0;
    color: #111;
  }
  .tallrow.bad {
    background: #fee0de;
    color: #c2544e;
    border-bottom: none;
  }
  .col1 {
    padding-left: 20px;
  }
  .col1 span {
    margin-left: 18px;
  }
  .tallrow .dash {
    margin-top: 5px;
  }
  .tfoot {
    height: 21px;
    flex: none;
    display: flex;
    align-items: center;
    padding-left: 10px;
  }
  .track {
    width: 312px;
    height: 7px;
    margin-left: 8px;
    background: #d4d4d4;
    border-radius: 4px;
  }
  .track.long {
    width: 900px;
    margin-right: auto;
  }
  .thumb {
    width: 297px;
    height: 7px;
    background: #989898;
    border-radius: 4px;
  }
  .track.long .thumb {
    width: 880px;
  }
  .arrr {
    margin: 0 auto 0 10px;
  }
  .nav {
    display: flex;
    flex: none;
    height: 21px;
    width: 97px;
    margin-left: auto;
    box-sizing: border-box;
    background: #fff;
    border: 1px solid #a0a0a0;
    border-top: none;
    border-right: none;
  }
  .navcell {
    flex: 1;
    display: flex;
    align-items: center;
    justify-content: center;
    border-right: 1px solid #a0a0a0;
    background: linear-gradient(#fff, #f5f5f5);
  }
  .tfoot .nav {
    margin-left: 0;
    border-bottom: none;
    border-top: 1px solid #a0a0a0;
  }
  .tfoot .navcell:last-child {
    border-right: none;
  }
  .tree {
    padding-left: 54px;
    gap: 0;
  }
  .tree span {
    margin-left: 21px;
  }
  .tree.root {
    padding-left: 19px;
  }
  .tree.root svg + svg {
    margin-left: 4px;
  }
  .tree.root span {
    margin-left: 19px;
  }
  .name {
    padding-left: 16px;
  }
  .trow.sel .c180 {
    background: #feeea0;
    border-right: 1px solid #fff;
  }
  .trow.sel .name {
    flex: 1;
    background: #f9dc21;
    color: #222;
  }

  .lower {
    margin-top: 4px;
    display: flex;
    height: 308px;
  }
  .lcol {
    width: 1283px;
    flex: none;
  }
  .icol {
    flex: 1;
    min-width: 0;
  }
  .tb.ops {
    margin-top: 3px;
  }
  .btn.plus {
    padding: 0 10px 0 8px;
    gap: 6px;
  }
  .btn.pen {
    width: 30px;
    padding: 0;
    justify-content: center;
  }
  .btn.findop {
    margin-left: 11px;
  }
  .table.ops {
    margin-top: 11px;
    height: 233px;
  }
  .table.ops .opcol {
    flex: none;
  }
  .th.ccol {
    flex: none;
    width: 239px;
    border-left: 2px solid #fff;
    box-sizing: border-box;
  }
  .op {
    padding-left: 16px;
  }
  .op span {
    margin-left: 15px;
  }
  .infobox {
    margin-top: 3px;
    height: 290px;
    box-sizing: border-box;
    padding: 4px 3px;
    background: #fff;
    border: 1px solid #d9d9d9;
    border-radius: 4px;
    color: #2f55b5;
    white-space: nowrap;
  }
  .ind {
    padding-left: 16px;
  }

  .modal {
    position: absolute;
    left: 512px;
    top: 177px;
    width: 761px;
    height: 635px;
    box-sizing: border-box;
    padding: 0 4px 5px;
    display: flex;
    flex-direction: column;
    background: #c6c8c9;
    border: 1px solid #6e7072;
    border-radius: 6px 6px 0 0;
    box-shadow: 0 2px 4px #0002;
  }
  .mtitle {
    height: 24px;
    flex: none;
    display: flex;
    align-items: center;
    margin-left: 4px;
  }
  .mlogo {
    margin-right: 9px;
  }
  .mtext {
    font-size: 11px;
    color: #3a3a3a;
    white-space: nowrap;
  }
  .mtools {
    margin-left: auto;
    display: flex;
    align-items: center;
    gap: 5px;
    padding-right: 5px;
  }
  .calsheet {
    margin-left: 2px;
  }
  .faded {
    opacity: .45;
  }
  .mtools .sep {
    margin: 0 1px;
  }
  .mmax {
    margin-left: 4px;
  }
  .mclose {
    margin-left: 6px;
  }
  .mbody {
    flex: 1;
    min-height: 0;
    padding: 11px 18px 0 13px;
    background: #fff;
    box-shadow: 0 1px 3px #0005;
  }
  .mhead {
    margin: 0;
    height: 22px;
    line-height: 22px;
    font-size: 18.800px;
    font-weight: 400;
    color: #111;
    white-space: nowrap;
  }
  .tb.mtb {
    margin-top: 11px;
  }
  .btn.primary {
    background: linear-gradient(#fbe54a, #f4d50e);
    border-color: #b9a01a;
    color: #3a3300;
    font-weight: 400;
    padding: 0 17px;
  }
  .hint {
    margin-top: 12px;
    height: 14px;
    line-height: 14px;
    font-size: 14px;
    letter-spacing: .5px;
    font-weight: 700;
    color: #2a5cb0;
    white-space: nowrap;
  }
  .table.modalt {
    margin-top: 9px;
    height: 440px;
  }
  .mrow:nth-child(even) {
    background: #f9f9f9;
  }
  .mrow.first {
    margin-top: 1px;
    height: 28px;
    background: #fff;
  }
  .mrow .col1 {
    padding-left: 19px;
  }
  .mrow.first .c310 {
    background: #f9dc21;
    color: #222;
  }
  .mrow.first .mname {
    flex: 1;
    background: #feeea0;
  }
  .mname {
    padding-left: 16px;
  }
  .mfoot {
    margin-top: -1px;
    display: flex;
    align-items: center;
    height: 38px;
    color: #444;
  }
  .avail {
    width: 160px;
  }
  .mfoot b {
    width: 72px;
    color: #333;
  }
  .check {
    width: 15px;
    height: 14px;
    box-sizing: border-box;
    border: 1px solid #b0b0b0;
    border-radius: 2px;
    margin-right: 5px;
  }

  .marks {
    position: absolute;
    left: 0;
    top: 0;
    pointer-events: none;
  }
</style>
